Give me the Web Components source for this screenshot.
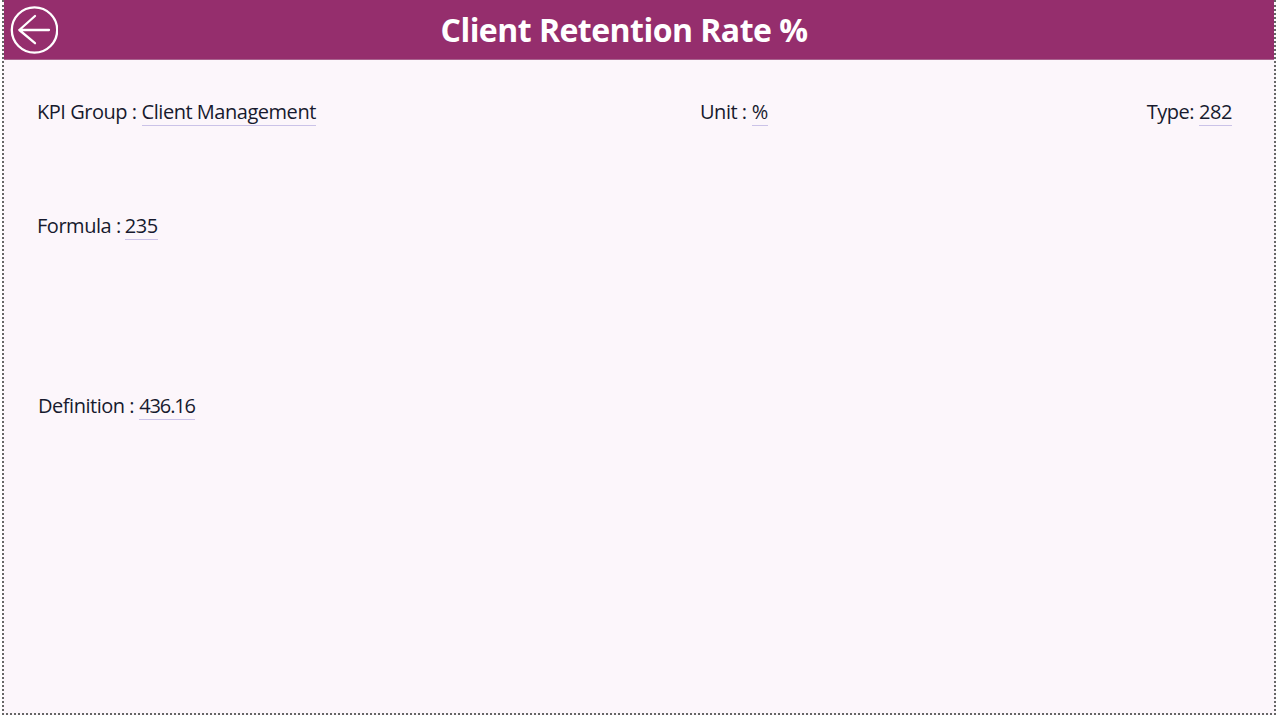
<!DOCTYPE html>
<html lang="en"><head><meta charset="utf-8"><title>Client Retention Rate %</title>
<style>
html,body{margin:0;padding:0;background:#fff;}
body{width:1280px;height:716px;overflow:hidden;font-family:"Open Sans","Noto Sans",sans-serif;}
</style></head><body>
<template id="kpi-field-t"><style>
:host{display:inline-flex;align-items:baseline;font-size:20px;line-height:26px;color:#171a2e;letter-spacing:-.47px;white-space:nowrap;}
.v{border-bottom:1px solid #cbc3e8;margin-left:var(--gap,5px);display:inline-block;line-height:26px;letter-spacing:var(--value-spacing,-.47px);}
</style><slot name="label"></slot><span class="v"><slot></slot></span></template>
<template id="kpi-header-t"><style>
:host{display:flex;align-items:center;height:59px;background:#952e6d;border-bottom:1px solid #a9648f;color:#fff;}
button{all:unset;display:block;width:48px;height:48px;margin:0 0 0 6px;flex:none;}
svg{display:block;}
h1{flex:1;margin:0;padding-right:84px;text-align:center;font:700 32px/40px "Open Sans","Noto Sans",sans-serif;letter-spacing:-.53px;}
</style><button aria-label="Back"><svg width="48" height="48" viewBox="0 0 48 48" fill="none" stroke="#fff" stroke-linecap="round" stroke-linejoin="round"><circle cx="24.500" cy="24" r="22.700" stroke-width="2.300"/><path d="M9.300 24H39M25 10L9.300 24L25 37.200" stroke-width="2.300"/></svg></button><h1><slot></slot></h1></template>
<template id="kpi-page-t"><style>
:host{display:flex;flex-direction:column;box-sizing:border-box;width:1274px;height:715px;margin-left:2px;border:2px dotted #666;border-top:0;background:#fcf6fb;}
.body{flex:1;display:flex;flex-direction:column;padding:39px 42px 0 33px;}
.r1{display:grid;grid-template-columns:663px 1fr auto;height:27px;}
.r2{margin-top:87px;height:27px;}
.r3{margin-top:153px;height:27px;padding-left:1px;}
</style><slot name="header"></slot><div class="body"><div class="r1"><slot name="group"></slot><slot name="unit"></slot><slot name="type"></slot></div><div class="r2"><slot name="formula"></slot></div><div class="r3"><slot name="definition"></slot></div></div></template>
<kpi-page>
<kpi-header slot="header">Client Retention Rate %</kpi-header>
<kpi-field slot="group"><span slot="label">KPI Group :</span>Client Management</kpi-field>
<kpi-field slot="unit"><span slot="label">Unit :</span>%</kpi-field>
<kpi-field slot="type"><span slot="label">Type:</span>282</kpi-field>
<kpi-field slot="formula" style="--gap:4px"><span slot="label">Formula :</span>235</kpi-field>
<kpi-field slot="definition" style="--value-spacing:-1.1px"><span slot="label">Definition :</span>436.16</kpi-field>
</kpi-page>
<script>
for(const [n,t] of [['kpi-page','kpi-page-t'],['kpi-header','kpi-header-t'],['kpi-field','kpi-field-t']]){
customElements.define(n,class extends HTMLElement{constructor(){super();this.attachShadow({mode:'open'}).appendChild(document.getElementById(t).content.cloneNode(true));}});
}
</script>
</body></html>
